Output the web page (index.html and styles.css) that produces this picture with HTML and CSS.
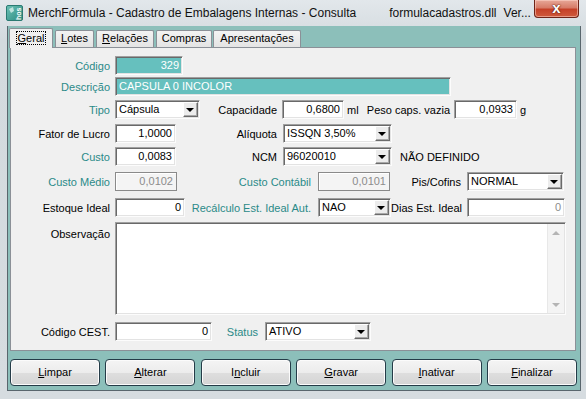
FILE: index.html
```html
<!DOCTYPE html>
<html lang="pt-BR">
<head>
  <meta charset="UTF-8">
  <title>MerchFórmula - Cadastro de Embalagens Internas - Consulta</title>
  <link rel="stylesheet" href="styles.css">
</head>
<body>
  <div class="window">
    <!-- barra de título -->
    <div class="titlebar">
      <svg class="app-icon" width="17" height="16" viewBox="0 0 17 16">
        <defs>
          <linearGradient id="ic" x1="0" y1="0" x2="1" y2="1">
            <stop offset="0" stop-color="#6cc2b6"/>
            <stop offset="1" stop-color="#2c8a80"/>
          </linearGradient>
        </defs>
        <rect x="0.5" y="0.5" width="16" height="15" rx="1.5" fill="url(#ic)" stroke="#2a7a72"/>
        <path d="M3 4 L7 2 L8 6 L5 8 Z" fill="#d8f0ec" opacity="0.8"/>
        <text x="14.5" y="15" font-family="Liberation Sans, sans-serif" font-size="7" font-weight="bold" fill="#fff" transform="rotate(-90 14.5 15)">hos</text>
      </svg>
      <span class="title-text">MerchFórmula - Cadastro de Embalagens Internas - Consulta</span>
      <span class="title-dll">formulacadastros.dll</span>
      <span class="title-ver">Ver...</span>
      <div class="close-btn">x</div>
    </div>

    <div class="client">
      <!-- abas -->
      <div class="tabs">
        <div class="tab active t-geral"><span class="focus"><u>G</u>eral</span></div>
        <div class="tab t-lotes"><u>L</u>otes</div>
        <div class="tab t-rel"><u>R</u>elações</div>
        <div class="tab t-compras">Compras</div>
        <div class="tab t-apres">Apresentações</div>
      </div>

      <div class="page">
        <div class="row r1">
          <span class="lbl teal">Código</span>
          <div class="fld key w-codigo num">329</div>
        </div>
        <div class="row r2">
          <span class="lbl teal">Descrição</span>
          <div class="fld key w-desc">CAPSULA 0 INCOLOR</div>
        </div>
        <div class="row r3">
          <span class="lbl teal">Tipo</span>
          <div class="sel w-tipo"><span class="sel-text">Cápsula</span><span class="sel-btn"></span></div>
          <span class="lbl2 l-capac">Capacidade</span>
          <div class="fld num w-capac">0,6800</div>
          <span class="unit">ml</span>
          <span class="lbl2 l-peso">Peso caps. vazia</span>
          <div class="fld num w-peso">0,0933</div>
          <span class="unit">g</span>
        </div>
        <div class="row r4">
          <span class="lbl">Fator de Lucro</span>
          <div class="fld num w-small">1,0000</div>
          <span class="lbl2 l-mid">Alíquota</span>
          <div class="sel w-aliq"><span class="sel-text">ISSQN 3,50%</span><span class="sel-btn"></span></div>
        </div>
        <div class="row r5">
          <span class="lbl teal">Custo</span>
          <div class="fld num w-small">0,0083</div>
          <span class="lbl2 l-mid">NCM</span>
          <div class="sel w-aliq"><span class="sel-text">96020010</span><span class="sel-btn"></span></div>
          <span class="ncm-desc">NÃO DEFINIDO</span>
        </div>
        <div class="row r6">
          <span class="lbl teal">Custo Médio</span>
          <div class="fld ro num w-medio">0,0102</div>
          <span class="lbl2 teal l-contabil">Custo Contábil</span>
          <div class="fld ro num w-contabil">0,0101</div>
          <span class="lbl2 l-pis">Pis/Cofins</span>
          <div class="sel w-pis"><span class="sel-text">NORMAL</span><span class="sel-btn"></span></div>
        </div>
        <div class="row r7">
          <span class="lbl">Estoque Ideal</span>
          <div class="fld num w-estoque">0</div>
          <span class="lbl2 teal l-recalc">Recálculo Est. Ideal Aut.</span>
          <div class="sel w-nao"><span class="sel-text">NAO</span><span class="sel-btn"></span></div>
          <span class="lbl2 l-dias">Dias Est. Ideal</span>
          <div class="fld num gray w-dias">0</div>
        </div>
        <div class="row r8">
          <span class="lbl lbl-top">Observação</span>
          <div class="memo">
            <div class="memo-text"></div>
            <div class="scroll">
              <span class="arrow up"></span>
              <span class="arrow down"></span>
            </div>
          </div>
        </div>
        <div class="row r9">
          <span class="lbl">Código CEST.</span>
          <div class="fld num w-cest">0</div>
          <span class="lbl2 teal l-status">Status</span>
          <div class="sel w-status"><span class="sel-text">ATIVO</span><span class="sel-btn"></span></div>
        </div>
      </div>

      <!-- botões -->
      <div class="buttons">
        <div class="btn"><u>L</u>impar</div>
        <div class="btn"><u>A</u>lterar</div>
        <div class="btn">I<u>n</u>cluir</div>
        <div class="btn"><u>G</u>ravar</div>
        <div class="btn"><u>I</u>nativar</div>
        <div class="btn"><u>F</u>inalizar</div>
      </div>
    </div>
  </div>
</body>
</html>
```

FILE: styles.css
```css
body {
  margin: 0;
  font-family: 'Liberation Sans', Arial, sans-serif;
  font-size: 11px;
  color: #000;
  background: #fff;
}
.window {
  width: 586px;
  height: 399px;
  display: flex;
  flex-direction: column;
  background: linear-gradient(to bottom, #e2e7eb 0, #d3dade 40px, #d6dce0 100%);
}
/* barra de título */
.titlebar {
  height: 26px;
  display: flex;
  align-items: center;
  padding-left: 6px;
  font-size: 12px;
  color: #111;
  white-space: nowrap;
}
.titlebar > * {
  flex-shrink: 0;
}
.app-icon {
  margin-right: 5px;
}
.title-dll {
  margin-left: 33px;
}
.title-ver {
  margin-left: 7px;
}
.close-btn {
  align-self: flex-start;
  margin-left: auto;
  margin-right: 7px;
  width: 45px;
  height: 18px;
  box-sizing: border-box;
  border: 1px solid #6e2418;
  border-top: none;
  border-radius: 0 0 4px 4px;
  background: linear-gradient(to bottom, #e7a898 0, #d77c68 45%, #c54128 55%, #cf5a3c 100%);
  box-shadow: inset 0 0 0 1px rgba(255, 220, 210, 0.5);
  color: #fff;
  font-weight: bold;
  font-size: 15px;
  line-height: 15px;
  text-align: center;
  text-shadow: 0 0 2px #5a1a10, 0 0 1px #5a1a10;
}
/* área cliente */
.client {
  flex: 1;
  margin: 0 5px 8px 7px;
  border: 1px solid #59666d;
  border-top: none;
  background: #8cbfba;
  display: flex;
  flex-direction: column;
  padding-bottom: 4px;
}
.tabs {
  height: 21px;
  display: flex;
  align-items: flex-end;
  margin-left: 1px;
}
.tab {
  height: 17px;
  box-sizing: border-box;
  margin-right: 1px;
  border: 1px solid #8b9097;
  border-bottom: none;
  border-radius: 2px 2px 0 0;
  background: linear-gradient(to bottom, #f3f3f3, #e4e4e4);
  line-height: 15px;
  text-align: center;
  white-space: nowrap;
}
.tab.active {
  height: 20px;
  margin-bottom: -1px;
  padding-top: 2px;
  background: #f0f0f0;
  position: relative;
  z-index: 1;
}
.t-geral { width: 44px; }
.t-lotes { width: 39px; margin-left: 1px; }
.t-rel { width: 58px; margin-left: 1px; }
.t-compras { width: 56px; margin-left: 1px; }
.t-apres { width: 88px; }
.focus {
  border: 1px dotted #000;
  padding: 0 1px;
}
.page {
  height: 304px;
  box-sizing: border-box;
  margin-left: 2px;
  width: 566px;
  border: 1px solid #8b9097;
  background: #f0f0f0;
  padding-top: 8px;
}
/* linhas do formulário */
.row {
  display: flex;
  align-items: center;
  height: 19px;
}
.r2 { margin-top: 2px; }
.r3 { margin-top: 4px; }
.r4 { margin-top: 5px; }
.r5 { margin-top: 4px; }
.r6 { margin-top: 6px; }
.r7 { margin-top: 7px; }
.r8 { margin-top: 5px; height: 93px; align-items: flex-start; }
.r9 { margin-top: 7px; }
.lbl {
  width: 99px;
  margin-right: 5px;
  text-align: right;
  white-space: nowrap;
}
.lbl-top {
  padding-top: 6px;
}
.lbl2 {
  text-align: right;
  white-space: nowrap;
}
.teal {
  color: #2a8a88;
}
.fld {
  height: 19px;
  box-sizing: border-box;
  border: 1px solid;
  border-color: #a0a0a0 #fcfcfc #fcfcfc #a0a0a0;
  box-shadow: inset 1px 1px 0 #696969, inset -1px -1px 0 #e3e3e3;
  background: #fff;
  padding: 1px 3px 0 3px;
  line-height: 15px;
  white-space: nowrap;
  overflow: hidden;
}
.fld.key {
  background: #66c0be;
  color: #fff;
}
.fld.ro {
  border-color: #8a8a8a;
  box-shadow: inset 1px 1px 0 #fff;
  background: #f4f4f4;
  color: #8c8c8c;
}
.fld.gray {
  color: #8c8c8c;
}
.num {
  text-align: right;
}
.sel {
  height: 19px;
  box-sizing: border-box;
  display: flex;
  border: 1px solid;
  border-color: #a0a0a0 #fcfcfc #fcfcfc #a0a0a0;
  box-shadow: inset 1px 1px 0 #696969, inset -1px -1px 0 #e3e3e3;
  background: #fff;
  padding: 1px;
}
.sel-text {
  flex: 1;
  padding-left: 2px;
  line-height: 15px;
  white-space: nowrap;
}
.sel-btn {
  width: 15px;
  height: 15px;
  box-sizing: border-box;
  border: 1px solid;
  border-color: #fff #6b6b6b #6b6b6b #fff;
  box-shadow: inset -1px -1px 0 #a8a8a8;
  background: #ececec;
  display: flex;
  align-items: center;
  justify-content: center;
}
.sel-btn::after {
  content: '';
  border-left: 4px solid transparent;
  border-right: 4px solid transparent;
  border-top: 4px solid #000;
  margin-left: -1px;
}
.unit {
  width: 20px;
  padding-left: 3px;
  box-sizing: border-box;
}
/* larguras dos campos */
.w-codigo { width: 68px; }
.w-desc { width: 336px; padding-left: 3px; }
.w-tipo { width: 85px; }
.w-capac { width: 62px; }
.w-peso { width: 63px; }
.w-small { width: 61px; }
.w-aliq { width: 109px; }
.w-medio { width: 62px; }
.w-contabil { width: 72px; }
.w-pis { width: 97px; }
.w-estoque { width: 70px; }
.w-nao { width: 73px; }
.w-dias { width: 98px; }
.w-cest { width: 97px; }
.w-status { width: 106px; }
.l-capac { width: 77px; margin-right: 5px; }
.l-peso { width: 86px; margin-right: 4px; }
.l-mid { width: 101px; margin-right: 6px; }
.l-contabil { width: 134px; margin-right: 7px; }
.l-pis { width: 71px; margin-right: 6px; }
.l-recalc { width: 126px; margin-right: 7px; }
.l-dias { width: 71px; margin-right: 5px; }
.l-status { width: 46px; margin-right: 7px; }
.ncm-desc {
  margin-left: 8px;
}
.memo {
  width: 451px;
  height: 93px;
  box-sizing: border-box;
  display: flex;
  border: 1px solid;
  border-color: #a0a0a0 #fcfcfc #fcfcfc #a0a0a0;
  box-shadow: inset 1px 1px 0 #696969, inset -1px -1px 0 #e3e3e3;
  background: #fff;
  padding: 1px;
}
.memo-text {
  flex: 1;
}
.scroll {
  width: 16px;
  background: #f4f4f4;
  border-left: 1px solid #e8e8e8;
  display: flex;
  flex-direction: column;
  justify-content: space-between;
  align-items: center;
  padding: 7px 0 6px 0;
}
.arrow {
  width: 0;
  height: 0;
  border-left: 4px solid transparent;
  border-right: 4px solid transparent;
}
.arrow.up {
  border-bottom: 4px solid #b4b4b4;
}
.arrow.down {
  border-top: 4px solid #b4b4b4;
}
/* botões */
.buttons {
  display: flex;
  justify-content: space-between;
  width: 567px;
  margin: 8px 0 0 2px;
}
.btn {
  width: 90px;
  height: 27px;
  box-sizing: border-box;
  border: 1px solid #253c48;
  border-radius: 4px;
  background: linear-gradient(to bottom, #f4f4f4 0, #ececec 50%, #dedede 51%, #d4d4d4 100%);
  box-shadow: inset 0 0 0 1px #fbfbfb;
  text-align: center;
  line-height: 25px;
}
u {
  text-underline-offset: 1px;
}
```
